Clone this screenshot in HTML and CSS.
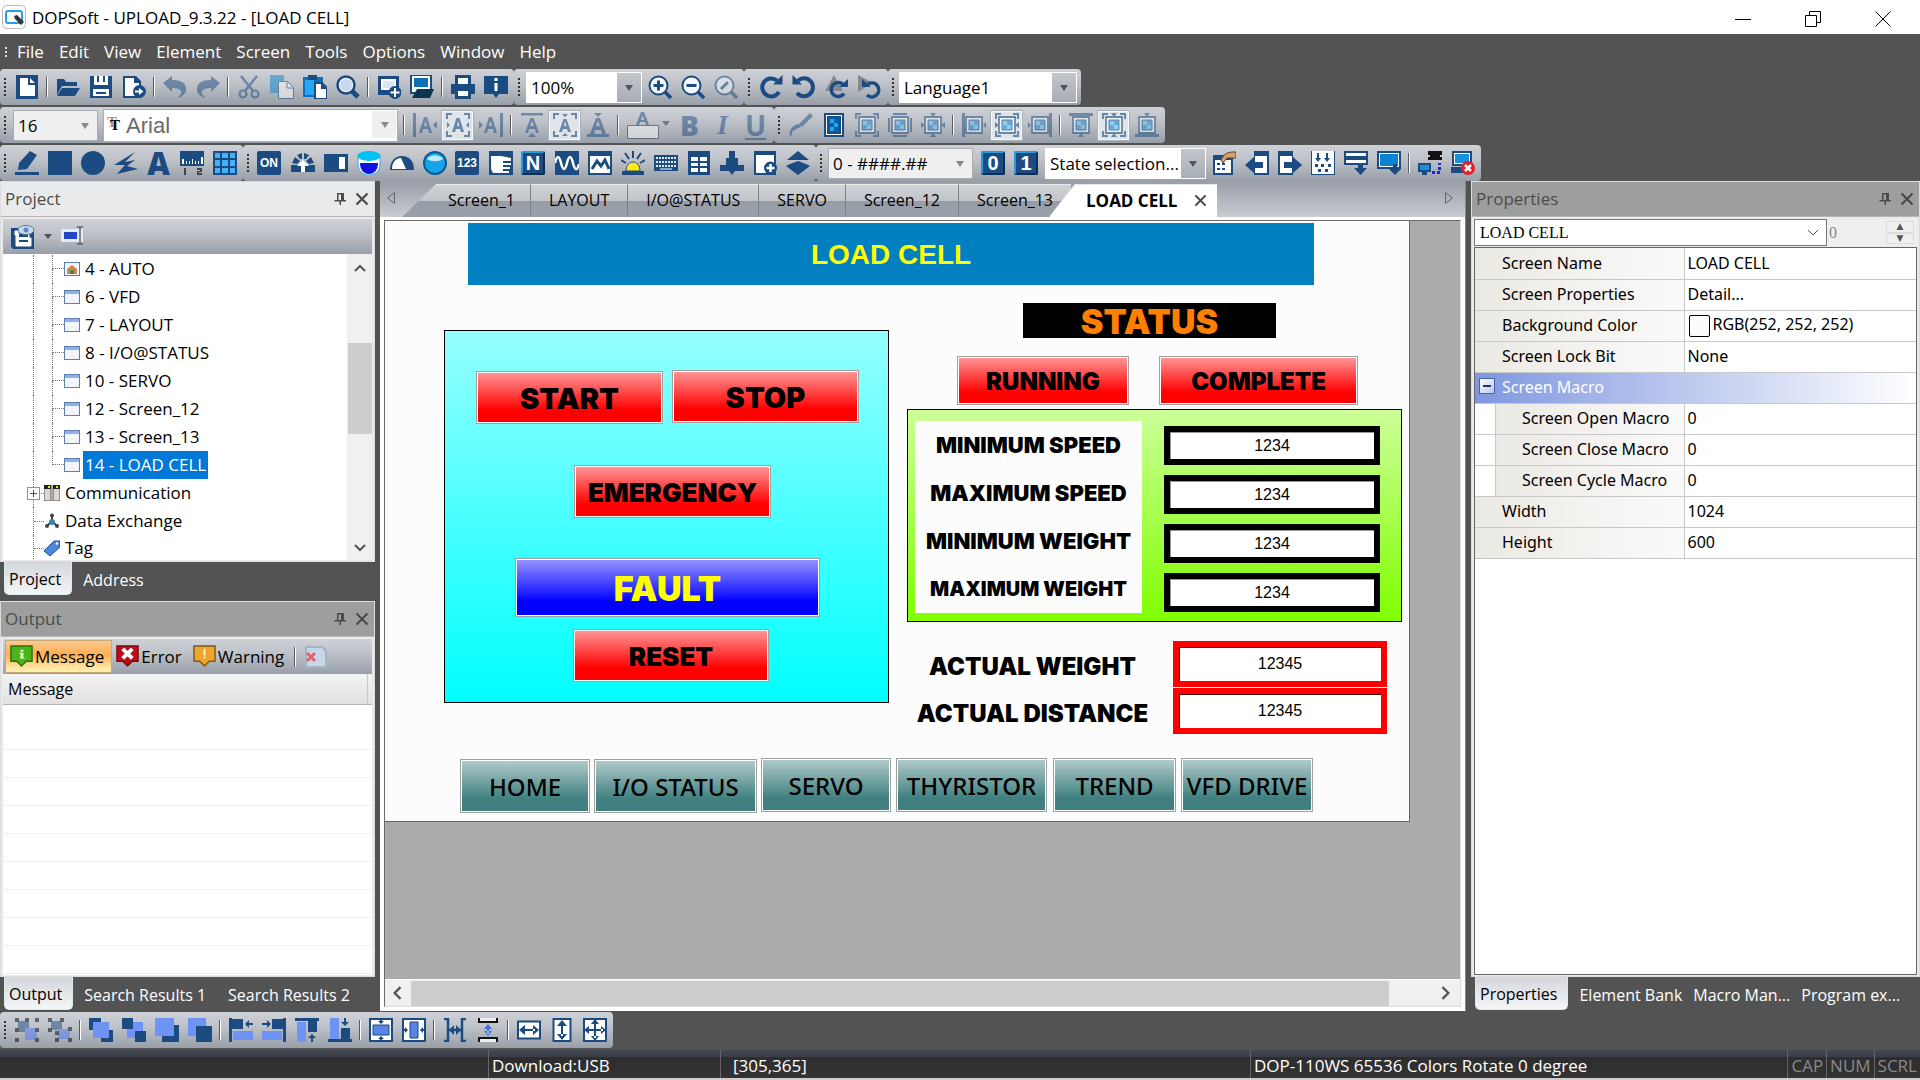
FILE: index.html
```html
<!DOCTYPE html>
<html lang="en">

<head>
    <meta charset="utf-8">
    <meta name="viewport" content="width=device-width, initial-scale=1">
    <title>DOPSoft - UPLOAD_9.3.22 - [LOAD CELL]</title>
    <link rel="stylesheet" href="styles.css">
</head>

<body>
    <!-- shared shapes -->
    <svg class="sprite" aria-hidden="true">
        <symbol id="pin" viewBox="0 0 14 14"><path d="M4 1h7v7h2v1.500H8V13H6.500V9.500H1.500V8H4zM5.500 2.500V8h2.500V2.500z" fill="currentColor" fill-rule="evenodd"/></symbol>
        <symbol id="close" viewBox="0 0 14 14"><path d="M1.500 1.500l11 11M12.500 1.500l-11 11" stroke="currentColor" stroke-width="2.200" fill="none"/></symbol>
        <symbol id="screen" viewBox="0 0 16 14"><rect x=".5" y=".5" width="15" height="13" fill="#f2f6fc" stroke="#5f7fae"/><rect x="1" y="1" width="14" height="3" fill="#8fb4ea"/></symbol>
        <symbol id="frame" viewBox="0 0 24 24"><path d="M4 4h16v16H4z" fill="#fff" stroke="#1b4b80" stroke-width="1.800"/><path d="M7 7h10v10H7z" fill="#1487d0" stroke="#1b4b80"/><path d="M8 8h4v4H8zM12 12h4v4h-4z" fill="#5cc0f5"/></symbol>
        <symbol id="corners" viewBox="0 0 24 24"><path d="M1 6V1h5M18 1h5v5M23 18v5h-5M6 23H1v-5" fill="none" stroke="#1b4b80" stroke-width="2"/></symbol>
    </svg>

    <div class="titlebar">
        <svg class="logo" viewBox="0 0 24 24"><rect x=".5" y=".5" width="23" height="23" rx="4" fill="#fff" stroke="#bbb"/><rect x="4" y="6" width="16" height="12" rx="2" fill="none" stroke="#2a9fe0" stroke-width="2"/><path d="M12 11l3-1 7 7-3 3-6-6z" fill="#333"/></svg>
        <span>DOPSoft - UPLOAD_9.3.22 - [LOAD CELL]</span>
        <div class="window-buttons">
            <button aria-label="Minimize"><svg viewBox="0 0 16 16"><path d="M0 8.500h16"/></svg></button>
            <button aria-label="Restore"><svg viewBox="0 0 16 16"><path d="M.5 4.500h11v11H.5zM4.500 4V.5h11v11H12"/></svg></button>
            <button aria-label="Close"><svg viewBox="0 0 16 16"><path d="M.5.5l15 15M15.500.5l-15 15"/></svg></button>
        </div>
    </div>

    <nav class="menubar">
        <i class="grip"></i>
        <a href="#">File</a>
        <a href="#">Edit</a>
        <a href="#">View</a>
        <a href="#">Element</a>
        <a href="#">Screen</a>
        <a href="#">Tools</a>
        <a href="#">Options</a>
        <a href="#">Window</a>
        <a href="#">Help</a>
    </nav>

    <div class="toolbars">
        <div class="toolbar-row">
            <div class="strip">
                <i class="grip"></i>
                <button class="tool" aria-label="New"><svg viewBox="0 0 24 24"><path d="M1 0h22v24H1z"/><path d="M5 3h8v7h7v11H5zM15 3l5 5h-5z" fill="#fff"/></svg></button>
                <i class="sep"></i>
                <button class="tool" aria-label="Open"><svg viewBox="0 0 24 24"><path d="M1 20V4h7l2 3h11v4H6z"/><path d="M6 13h18l-5 8H1z"/></svg></button>
                <button class="tool" aria-label="Save"><svg viewBox="0 0 24 24"><path d="M1 1h22v22H1z"/><path d="M5 1h14v9H5zM4 14h16v7H4z" fill="#fff"/><path d="M8 1h2v6H8zM14 1h2v6h-2zM7 17h10v2H7z"/></svg></button>
                <button class="tool" aria-label="Export"><svg viewBox="0 0 24 24"><path d="M1 1h13l5 5v17H1z"/><path d="M3 3h9v5h5v13H3z" fill="#fff"/><circle cx="17.500" cy="16.500" r="6.500"/><path d="M13 15.500h4V13l4.500 3.500L17 20v-2.500h-4z" fill="#fff"/></svg></button>
                <i class="sep"></i>
                <button class="tool" aria-label="Undo" disabled><svg viewBox="0 0 24 24"><path d="M0 8l9-7v4c9 0 14 3 14 9 0 5-4 8-9 9 4-3 5-5 4-7s-4-3-9-3v4z"/></svg></button>
                <button class="tool" aria-label="Redo" disabled><svg viewBox="0 0 24 24"><path d="M24 8l-9-7v4C6 5 1 8 1 14c0 5 4 8 9 9-4-3-5-5-4-7s4-3 9-3v4z"/></svg></button>
                <i class="sep"></i>
                <button class="tool" aria-label="Cut" disabled><svg viewBox="0 0 24 24"><path d="M4 1l12 15M20 1L8 16" stroke="#1b4b80" stroke-width="2.500"/><circle cx="6" cy="19" r="3.500" fill="none" stroke="#1b4b80" stroke-width="2.200"/><circle cx="18" cy="19" r="3.500" fill="none" stroke="#1b4b80" stroke-width="2.200"/></svg></button>
                <button class="tool" aria-label="Copy" disabled><svg viewBox="0 0 24 24"><path d="M0 0h14v18H0z" fill="#0a86cc"/><path d="M8.500 6.500h9l6 6v11h-15z" fill="#fff" stroke="#1b4b80"/><path d="M17 7v6h6" fill="none" stroke="#1b4b80"/></svg></button>
                <button class="tool" aria-label="Paste"><svg viewBox="0 0 24 24"><path d="M0 2h20v20H0z" fill="#0d6fc0"/><path d="M5 0h9v5H5z"/><path d="M2 5h9v15H2z" fill="#26a8f0"/><path d="M12 8h7l5 5v11H12z" fill="#fff" stroke="#1b4b80" stroke-width="2"/><path d="M18 8v6h6"/></svg></button>
                <button class="tool" aria-label="Find"><svg viewBox="0 0 24 24"><path d="M15 15l7 7" stroke="#1b4b80" stroke-width="5"/><circle cx="10" cy="10" r="8.500" fill="#eef3fa" stroke="#1b4b80" stroke-width="2.500"/><circle cx="10" cy="10" r="6" fill="#c9d8ec"/></svg></button>
                <i class="sep"></i>
                <button class="tool" aria-label="New screen"><svg viewBox="0 0 24 24"><path d="M1 1h21v19H1z"/><path d="M4 4h15v11H4z" fill="#fff"/><path d="M6 6h11v7H6z" fill="#dce6f2"/><circle cx="18" cy="17.500" r="6.500"/><path d="M17 13h2v3.500h3.500v2H19V22h-2v-3.500h-3.500v-2H17z" fill="#fff"/></svg></button>
                <button class="tool" aria-label="Open screen"><svg viewBox="0 0 24 24"><path d="M1 0h20v18H1z" fill="#fff" stroke="#1b4b80" stroke-width="2"/><path d="M4 3h14v9H4z" fill="#0d6fb8"/><path d="M2 23l5-9h17l-4 9z" fill="#0b3550"/></svg></button>
                <i class="sep"></i>
                <button class="tool" aria-label="Print"><svg viewBox="0 0 24 24"><path d="M4 0h16v9H4z"/><path d="M7 3h10v6H7z" fill="#fff"/><path d="M0 9h24v10H0z"/><path d="M4 15h16v9H4z"/><path d="M7 16h10v5H7z" fill="#fff"/></svg></button>
                <button class="tool" aria-label="About"><svg viewBox="0 0 24 24"><path d="M0 1h24v18h-9l-3 4-3-4H0z"/><path d="M10.500 3h3v3h-3zM10.500 8h3v8h-3z" fill="#fff"/></svg></button>
            </div>
            <div class="strip">
                <i class="grip"></i>
                <label class="combo zoom-combo"><select aria-label="Zoom"><option>100%</option></select></label>
                <button class="tool" aria-label="Zoom in"><svg viewBox="0 0 24 24"><path d="M16 16l7 7" stroke="#1b4b80" stroke-width="3.500"/><circle cx="10.500" cy="10.500" r="9" fill="#f4f7fb" stroke="#1b4b80" stroke-width="2"/><path d="M5.500 10.500h10M10.500 5.500v10" stroke="#1b4b80" stroke-width="3"/></svg></button>
                <button class="tool" aria-label="Zoom out"><svg viewBox="0 0 24 24"><path d="M16 16l7 7" stroke="#1b4b80" stroke-width="3.500"/><circle cx="10.500" cy="10.500" r="9" fill="#f4f7fb" stroke="#1b4b80" stroke-width="2"/><path d="M5.500 10.500h10" stroke="#1b4b80" stroke-width="3"/></svg></button>
                <button class="tool" aria-label="Actual size" disabled><svg viewBox="0 0 24 24"><path d="M16 16l7 7" stroke="#1b4b80" stroke-width="3.500"/><circle cx="10.500" cy="10.500" r="9" fill="#f4f7fb" stroke="#1b4b80" stroke-width="2"/><path d="M7 14l7-7" stroke="#1b4b80" stroke-width="3"/></svg></button>
            </div>
            <div class="strip">
                <i class="grip"></i>
                <button class="tool" aria-label="Rotate right"><svg viewBox="0 0 24 24"><path d="M18 5.500A9 9 0 1 0 20 17" fill="none" stroke="#1b4b80" stroke-width="4"/><path d="M14 9.500h9.500V0z"/></svg></button>
                <button class="tool" aria-label="Rotate left"><svg viewBox="0 0 24 24"><path d="M6 5.500A9 9 0 1 1 5 18" fill="none" stroke="#1b4b80" stroke-width="4"/><path d="M10 9.500H.5V0z"/></svg></button>
                <button class="tool" aria-label="Rotate clockwise"><svg viewBox="0 0 24 24"><path d="M9 0l9 16H0z" fill="#858a92"/><path d="M18 9.500A7 7 0 1 0 19 18.500" fill="none" stroke="#1b4b80" stroke-width="3.500"/><path d="M14 12h9V4z"/></svg></button>
                <button class="tool" aria-label="Rotate anticlockwise"><svg viewBox="0 0 24 24"><path d="M0 0l15 8-15 9z" fill="#858a92"/><path d="M10 9A7 7 0 1 1 9 20" fill="none" stroke="#1b4b80" stroke-width="3.500"/><path d="M13 12H4V4z"/></svg></button>
            </div>
            <div class="strip">
                <i class="grip"></i>
                <label class="combo language-combo"><select aria-label="Language"><option>Language1</option></select></label>
            </div>
        </div>

        <div class="toolbar-row">
            <div class="strip">
                <i class="grip"></i>
                <label class="combo size-combo flat"><select aria-label="Font size"><option>16</option></select></label>
                <label class="combo font-combo flat"><b class="tt">T</b><select aria-label="Font"><option>Arial</option></select></label>
                <i class="sep"></i>
                <button class="tool" aria-label="Text left" disabled><svg viewBox="0 0 24 24"><path d="M0 0h3v24H0zM24 8v8l-4-4z"/><path d="M6 20l5-16h3l5 16h-3l-1-4H10l-1 4zm5-7h3l-1.500-5z"/></svg></button>
                <button class="tool on" aria-label="Text middle"><svg viewBox="0 0 24 24"><use href="#corners"/><path d="M6 19L10.500 5h3L18 19h-3l-1-3h-4l-1 3zm5-6h2.500L12 8zM1 9l3 3-3 3zM23 9l-3 3 3 3z"/></svg></button>
                <button class="tool" aria-label="Text right" disabled><svg viewBox="0 0 24 24"><path d="M21 0h3v24h-3zM0 8v8l4-4z"/><path d="M5 20l5-16h3l5 16h-3l-1-4H9l-1 4zm5-7h3l-1.500-5z"/></svg></button>
                <i class="sep"></i>
                <button class="tool" aria-label="Text top" disabled><svg viewBox="0 0 24 24"><path d="M1 0h22v2.500H1zM8 24l4-4 4 4z"/><path d="M5 20l5.500-15h3L19 20h-3l-1-4H9l-1 4zm5-7h4l-2-5z"/></svg></button>
                <button class="tool on" aria-label="Text center"><svg viewBox="0 0 24 24"><use href="#corners"/><path d="M6 19L10.500 6h3L18 19h-3l-1-3h-4l-1 3zm5-6h2.500L12 8zM9 1h6l-3 3zM9 23h6l-3-3z"/></svg></button>
                <button class="tool" aria-label="Text bottom" disabled><svg viewBox="0 0 24 24"><path d="M1 21h22v3H1zM8 0l4 4 4-4z"/><path d="M4 21l6-16h4l6 16h-4l-1-4H9l-1 4zm6-8h4l-2-5z"/></svg></button>
                <i class="sep"></i>
                <button class="tool wide" aria-label="Font color" disabled><svg class="color-a" viewBox="0 0 44 28"><path d="M10 14L15 1h3l5 13h-3l-1-3h-5l-1 3zM15 9h3l-1.500-5z"/><path d="M1.500 14.500h31v13h-31z" fill="#fff" stroke="#333"/><path d="M36 10h8l-4 5z" fill="#333"/></svg></button>
                <button class="tool letter" disabled><b>B</b></button>
                <button class="tool letter" disabled><em>I</em></button>
                <button class="tool letter" disabled><u>U</u></button>
            </div>
            <div class="strip">
                <i class="grip"></i>
                <button class="tool" aria-label="Brush" disabled><svg viewBox="0 0 24 24"><path d="M10 11L21 0l3 3-11 11z"/><path d="M11 12c3 3-4 3-7 6-2 2-1 4-2 6-2-2-2-5 0-8 3-4 7-6 9-4z"/></svg></button>
                <button class="tool" aria-label="Fill"><svg viewBox="0 0 24 24"><path d="M2 0h20v24H2z"/><path d="M4 2h16v20H4z" fill="#fff"/><path d="M5 3h14v18H5z"/><path d="M7 5h10v14H7z" fill="#0a60a8"/><path d="M8 6h4v4H8zM12 10h4v4h-4zM8 14h4v4H8z" fill="#27a4ee"/></svg></button>
                <button class="tool" aria-label="Picture stretch" disabled><svg viewBox="0 0 24 24"><use href="#frame"/><use href="#corners"/></svg></button>
                <button class="tool" aria-label="Picture keep" disabled><svg viewBox="0 0 24 24"><use href="#frame"/><path d="M5 0h14v2H5zM5 22h14v2H5zM0 5h2v14H0zM22 5h2v14h-2z"/></svg></button>
                <button class="tool" aria-label="Picture fit" disabled><svg viewBox="0 0 24 24"><use href="#frame"/><path d="M9 0h6l-3 4zM9 24h6l-3-4zM0 9v6l4-3zM24 9v6l-4-3z"/></svg></button>
                <i class="sep"></i>
                <button class="tool" aria-label="Picture left" disabled><svg viewBox="0 0 24 24"><use href="#frame"/><path d="M0 0h3v24H0zM24 9v6l-3-3z"/></svg></button>
                <button class="tool on" aria-label="Picture middle"><svg viewBox="0 0 24 24"><use href="#frame"/><use href="#corners"/><path d="M0 9v6l4-3zM24 9v6l-4-3z"/></svg></button>
                <button class="tool" aria-label="Picture right" disabled><svg viewBox="0 0 24 24"><use href="#frame"/><path d="M21 0h3v24h-3zM0 9v6l3-3z"/></svg></button>
                <i class="sep"></i>
                <button class="tool" aria-label="Picture top" disabled><svg viewBox="0 0 24 24"><use href="#frame"/><path d="M0 0h24v3H0zM9 24h6l-3-4z"/></svg></button>
                <button class="tool on" aria-label="Picture center"><svg viewBox="0 0 24 24"><use href="#frame"/><use href="#corners"/><path d="M9 0h6l-3 4zM9 24h6l-3-4z"/></svg></button>
                <button class="tool" aria-label="Picture bottom" disabled><svg viewBox="0 0 24 24"><use href="#frame"/><path d="M0 21h24v3H0zM9 0h6l-3 4z"/></svg></button>
            </div>
        </div>

        <div class="toolbar-row">
            <div class="strip">
                <i class="grip"></i>
                <button class="tool" aria-label="Line"><svg viewBox="0 0 24 24"><path d="M0 21h24v3H0zM3 19l1-7L15 0l7 4-10 14z"/></svg></button>
                <button class="tool" aria-label="Rectangle"><svg viewBox="0 0 24 24"><path d="M0 0h24v24H0z"/></svg></button>
                <button class="tool" aria-label="Ellipse"><svg viewBox="0 0 24 24"><circle cx="12" cy="12" r="12"/></svg></button>
                <button class="tool" aria-label="Polygon"><svg viewBox="0 0 24 24"><path d="M21 1L0 14h11L3 23l21-5-11-3 8-6-10 2z"/></svg></button>
                <button class="tool letter big"><b>A</b></button>
                <button class="tool" aria-label="Scale"><svg viewBox="0 0 24 24"><path d="M0 0h24v15H0z"/><path d="M2 8h2v5H2zM6 10h1v3H6zM9 10h1v3H9zM12 8h1v5h-1zM15 10h1v3h-1zM18 10h1v3h-1zM21 6h2v7h-2z" fill="#fff"/><path d="M4 17h2v7H4zM17 17h5v4h-3v1h3v2h-5v-4h3v-1h-3z" fill="#444"/></svg></button>
                <button class="tool" aria-label="Table"><svg viewBox="0 0 24 24"><path d="M0 0h24v24H0z"/><path d="M2 2h5v5H2zM9 2h6v5H9zM17 2h5v5h-5zM2 9h5v6H2zM9 9h6v6H9zM17 9h5v6h-5zM2 17h5v5H2zM9 17h6v5H9zM17 17h5v5h-5z" fill="#43b1f7"/></svg></button>
            </div>
            <div class="strip">
                <i class="grip"></i>
                <button class="tool badge">ON</button>
                <button class="tool" aria-label="Meter"><svg viewBox="0 0 24 24"><path d="M1 12l3-6 5 4-3 3zM6 4l5-2v6H9zM13 2l5 2-3 4h-2zM20 6l3 6-5 1-3-3zM0 14h24v7H0z"/><path d="M12 9l6 6h-4v6h-4v-6H6z" fill="#fff"/></svg></button>
                <button class="tool" aria-label="Bar"><svg viewBox="0 0 24 24"><path d="M0 3h24v18H0z"/><path d="M15 6h6v12h-6z" fill="#fff"/></svg></button>
                <button class="tool" aria-label="Tank"><svg viewBox="0 0 24 24"><path d="M1 4v9c0 7 5 11 11 11s11-4 11-11V4z" fill="#fff" stroke="#35a7e8"/><path d="M3 12h18c0 7-4 11-9 11s-9-4-9-11z" fill="#1010e0"/><ellipse cx="12" cy="5" rx="11.500" ry="5" fill="#00c0f5"/></svg></button>
                <button class="tool" aria-label="Gauge"><svg viewBox="0 0 24 24"><path d="M0 19C0 10 5 5 12 5s12 5 12 14z"/><path d="M2 18C2 11 6 7 11 7l5 11z" fill="#fff"/></svg></button>
                <button class="tool" aria-label="Pie"><svg viewBox="0 0 24 24"><circle cx="12" cy="12" r="11" fill="#18a4e8" stroke="#0a5a9a" stroke-width="2"/><path d="M4 8c3-5 13-5 16 0-4 3-12 3-16 0z" fill="#bde9fb"/></svg></button>
                <button class="tool badge">123</button>
                <button class="tool" aria-label="Text list"><svg viewBox="0 0 24 24"><path d="M0 0h24v24H0z"/><path d="M2 5h10l10 2v3h-8v2h8v2h-8v2h7v2h-7v2h6v2H4L2 18z" fill="#fff"/></svg></button>
                <button class="tool badge big">N</button>
                <button class="tool" aria-label="Curve"><svg viewBox="0 0 24 24"><path d="M0 0h24v24H0z"/><path d="M0 12c2-8 4-8 6 0s4 8 6 0 4-8 6 0 4 8 6 1" fill="none" stroke="#fff" stroke-width="2.500"/></svg></button>
                <button class="tool" aria-label="History"><svg viewBox="0 0 24 24"><path d="M0 0h24v24H0z"/><path d="M2 5h20v17H2z" fill="#fff"/><path d="M4 18l5-8 4 5 4-6 4 9" fill="none" stroke="#1b4b80" stroke-width="3"/></svg></button>
                <button class="tool" aria-label="Alarm"><svg viewBox="0 0 24 24"><path d="M1 20h22v4H1z"/><path d="M5 20c0-12 14-12 14 0z" fill="#ffe81a" stroke="#1b4b80"/><path d="M12 0v7M4 2l4 6M20 2l-4 6M0 9l5 3M24 9l-5 3" stroke="#1b4b80" stroke-width="2"/></svg></button>
                <button class="tool" aria-label="Keyboard"><svg viewBox="0 0 24 24"><path d="M0 4h24v16H0z"/><path d="M2 7h20M2 11h20M2 15h20" stroke="#dfe6ef" stroke-width="2" stroke-dasharray="2 1"/><path d="M6 18h12" stroke="#fff"/></svg></button>
                <button class="tool" aria-label="Recipe"><svg viewBox="0 0 24 24"><path d="M1 0h22v24H1z"/><path d="M4 6h7v4H4zM13 6h7v4h-7zM4 12h7v3H4zM13 12h7v3h-7zM4 17h7v4H4zM13 17h7v4h-7z" fill="#fff"/></svg></button>
                <button class="tool" aria-label="Slider"><svg viewBox="0 0 24 24"><path d="M9 0h6v7h3v7h6v6h-9l-3 4-3-4H0v-6h6V7h3z"/></svg></button>
                <button class="tool" aria-label="Add element"><svg viewBox="0 0 24 24"><path d="M1 0h22v24H1z"/><path d="M3 4h18v18H3z" fill="#fff"/><circle cx="17.500" cy="17" r="6.500"/><path d="M13.500 17h8M17.500 13v8" stroke="#fff" stroke-width="2.500"/></svg></button>
                <button class="tool" aria-label="Layers"><svg viewBox="0 0 24 24"><path d="M12 0l11 9H1zM4 13l8-3 8 3 4 2-12 9L0 15z"/></svg></button>
            </div>
            <div class="strip">
                <i class="grip"></i>
                <label class="combo format-combo flat"><select aria-label="Format"><option>0 - ####.##</option></select></label>
                <button class="tool badge state">0</button>
                <button class="tool badge state">1</button>
                <label class="combo state-combo"><select aria-label="State"><option>State selection...</option></select></label>
                <button class="tool" aria-label="Settings"><svg viewBox="0 0 24 24"><path d="M1 4h20v20H1z"/><path d="M3 9h16v13H3z" fill="#fff"/><path d="M5 12h3v2H5zM10 12h3v2h-3zM5 17h3v2H5zM10 17h3v2h-3z"/><path d="M9 9c4-8 8-8 15-8v6h-9l-4 5z" fill="#d9a066" stroke="#5a4030"/></svg></button>
                <button class="tool" aria-label="Previous screen"><svg viewBox="0 0 24 24"><path d="M9 0h15v24H9z"/><path d="M10 5h12v17H10z" fill="#fff"/><path d="M0 14l9-8v5h9v6H9v5z"/></svg></button>
                <button class="tool" aria-label="Next screen"><svg viewBox="0 0 24 24"><path d="M0 0h15v24H0z"/><path d="M2 5h12v17H2z" fill="#fff"/><path d="M24 14l-9-8v5H6v6h9v5z"/></svg></button>
                <button class="tool" aria-label="Download all"><svg viewBox="0 0 24 24"><path d="M0 0h24v24H0z"/><path d="M1 0h22v23H1z" fill="#fff"/><path d="M7 2v6M16 2v6" stroke="#1b4b80" stroke-width="2"/><path d="M4 7h6l-3 4zM13 7h6l-3 4zM4 13h3v3H4zM10 13h3v3h-3zM17 13h3v3h-3zM7 18h3v3H7zM14 18h3v3h-3z"/></svg></button>
                <button class="tool" aria-label="Download screen"><svg viewBox="0 0 24 24"><path d="M1 1h22v5H1zM1 8h22v5H1z" fill="#fff" stroke="#1b4b80" stroke-width="2"/><path d="M14 12h5v5h4l-6.500 7L10 17h4zM6 5h12v4H6z"/></svg></button>
                <button class="tool" aria-label="Download data"><svg viewBox="0 0 24 24"><path d="M0 0h24v18H0z"/><path d="M2 2h20v14H2z" fill="#fff"/><path d="M3 3h18v12H3z" fill="#0a84d0"/><path d="M16 13h4v5h4l-6 6-6-6h4z"/></svg></button>
                <i class="sep"></i>
                <button class="tool" aria-label="Online simulation"><svg viewBox="0 0 24 24"><path d="M10 0h14v4H10zM12 4h10v2H12zM10 6h14v3H10z" fill="#111"/><path d="M0 12h13v9H0z"/><path d="M2 14h9v5H2z" fill="#1a90dc"/><path d="M4 21h5v3H4z"/><path d="M14 20h3v3h-3zM19 20h3v3h-3zM20 16h3v3h-3zM20 12h3v2h-3z" fill="#2222dd"/></svg></button>
                <button class="tool" aria-label="Offline simulation"><svg viewBox="0 0 24 24"><path d="M1 0h20v15H1zM0 16h20v6H0z"/><path d="M3 2h16v11H3z" fill="#fff"/><path d="M4 3h14v9H4z" fill="#1a90dc"/><circle cx="17" cy="17" r="7" fill="#e3202a"/><path d="M14 14l6 6M20 14l-6 6" stroke="#fff" stroke-width="2.500"/></svg></button>
            </div>
        </div>
    </div>

    <main class="workspace">
        <aside class="dock left-dock">
            <section class="panel project-panel">
                <h2 class="panel-title active">Project <svg><use href="#pin"/></svg><svg><use href="#close"/></svg></h2>
                <div class="panel-tools">
                    <button class="tool" aria-label="Project view"><svg viewBox="0 0 24 24"><path d="M0 3h23v21H2L0 22z"/><path d="M4 6h3v3h11v4h2v8H5V10H4zM7 12v7M10 13h7v2h-7zM10 17h7v2h-7z" fill="#fff" stroke="#fff"/><path d="M8 9h9v3H8zM8 15h9v2H8z"/><ellipse cx="15" cy="5" rx="8" ry="4.500" fill="#c8dcec" stroke="#5d7d9d"/><circle cx="15" cy="5" r="2.500" fill="#5d8cb8"/></svg></button>
                    <i class="caret"></i>
                    <button class="tool" aria-label="Rename"><svg viewBox="0 0 24 24"><path d="M0 4h22v13H0z" fill="#e5e9f2"/><path d="M3 7h13v7H3z" fill="#2347c4"/><path d="M16 2h6M16 19h6M19 2v17" stroke="#666" stroke-width="1.500"/></svg></button>
                </div>
                <div class="tree-wrap">
                    <ul class="tree">
                        <li class="sub"><svg viewBox="0 0 16 14"><rect x=".5" y=".5" width="15" height="13" fill="#f2f6fc" stroke="#5f7fae"/><path d="M3 7l5-4 5 4v5H3z" fill="#c88c4a"/><path d="M6 8h4v4H6z" fill="#5c7a4a"/></svg><span>4 - AUTO</span></li>
                        <li class="sub"><svg><use href="#screen"/></svg><span>6 - VFD</span></li>
                        <li class="sub"><svg><use href="#screen"/></svg><span>7 - LAYOUT</span></li>
                        <li class="sub"><svg><use href="#screen"/></svg><span>8 - I/O@STATUS</span></li>
                        <li class="sub"><svg><use href="#screen"/></svg><span>10 - SERVO</span></li>
                        <li class="sub"><svg><use href="#screen"/></svg><span>12 - Screen_12</span></li>
                        <li class="sub"><svg><use href="#screen"/></svg><span>13 - Screen_13</span></li>
                        <li class="sub last"><svg><use href="#screen"/></svg><span class="selected">14 - LOAD CELL</span></li>
                        <li class="top"><i class="expander"></i><svg viewBox="0 0 16 16"><path d="M0 0h7v16H0zM9 0h7v16H9z" fill="#ddd8cf" stroke="#555"/><path d="M0 0h7v4H0zM9 0h7v4H9z" fill="#222"/><path d="M4 1h2v2H4zM12 1h2v2h-2z" fill="#ee0"/></svg><span>Communication</span></li>
                        <li class="top"><svg viewBox="0 0 16 16"><path d="M8 2v6L3 13M8 8l5 5" stroke="#444" stroke-width="2" fill="none"/><circle cx="8" cy="9" r="3" fill="#3b83b4"/><circle cx="8" cy="2.500" r="2" fill="#444"/><circle cx="3" cy="13" r="2" fill="#444"/><circle cx="13" cy="13" r="2" fill="#444"/></svg><span>Data Exchange</span></li>
                        <li class="top"><svg viewBox="0 0 16 16"><path d="M0 11L10 1h6v6L6 16z" fill="#4b86dc" stroke="#284f94"/><circle cx="13" cy="3.500" r="1.300" fill="#fff"/></svg><span>Tag</span></li>
                    </ul>
                    <div class="vscroll"><svg viewBox="0 0 12 8"><path d="M1 7l5-5 5 5"/></svg><i></i><svg viewBox="0 0 12 8"><path d="M1 1l5 5 5-5"/></svg></div>
                </div>
            </section>
            <div class="dock-tabs">
                <button class="current">Project</button>
                <button>Address</button>
            </div>

            <section class="panel output-panel">
                <h2 class="panel-title">Output <svg><use href="#pin"/></svg><svg><use href="#close"/></svg></h2>
                <div class="panel-tools output-tools">
                    <button class="filter pressed"><svg viewBox="0 0 24 24"><path d="M1 1h22v16h-6l-5 5-5-5H1z" fill="#4bb417" stroke="#2f6d10" stroke-width="1.500"/><path d="M11 5h3v2h-3zM10 8h4v5h1v1h-5v-1h1V9h-1z" fill="#e9ffd8"/></svg>Message</button>
                    <button class="filter"><svg viewBox="0 0 24 24"><path d="M1 1h22v16h-6l-5 5-5-5H1z" fill="#c00a16" stroke="#7e0a10" stroke-width="1.500"/><path d="M7 4l10 10M17 4L7 14" stroke="#fff" stroke-width="4"/></svg>Error</button>
                    <button class="filter"><svg viewBox="0 0 24 24"><path d="M1 1h22v16h-6l-5 5-5-5H1z" fill="#eea52c" stroke="#7a5a1e" stroke-width="1.500"/><path d="M11 4h2v7h-2zM11 12h2v2h-2z" fill="#fff2c8"/></svg>Warning</button>
                    <i class="sep"></i>
                    <button class="tool" aria-label="Clear"><svg viewBox="0 0 24 24"><path d="M2 2h16l4 4v16H2z" fill="#c9d6e6" stroke="#a3b3c8" stroke-width="2"/><path d="M3 8l8 8M11 8l-8 8" stroke="#e0646c" stroke-width="3"/></svg></button>
                </div>
                <div class="list-head">Message</div>
                <div class="list-body"></div>
            </section>
            <div class="dock-tabs">
                <button class="current">Output</button>
                <button>Search Results 1</button>
                <button>Search Results 2</button>
            </div>
        </aside>

        <section class="editor">
            <div class="editor-tabs">
                <button class="arrow" aria-label="Scroll tabs left"><svg viewBox="0 0 10 14"><path d="M8.500 1.500v11L1.500 7z"/></svg></button>
                <button class="tab first">Screen_1</button>
                <button class="tab">LAYOUT</button>
                <button class="tab">I/O@STATUS</button>
                <button class="tab">SERVO</button>
                <button class="tab">Screen_12</button>
                <button class="tab">Screen_13</button>
                <button class="tab current">LOAD CELL <svg><use href="#close"/></svg></button>
                <button class="arrow end" aria-label="Scroll tabs right"><svg viewBox="0 0 10 14"><path d="M1.500 1.500v11l7-5.500z"/></svg></button>
            </div>
            <div class="editor-body">
                <div class="canvas">
                    <!-- HMI screen, 1024 x 600 -->
                    <div class="hmi">
                        <div class="item banner">LOAD CELL</div>
                        <div class="item cyan-box"></div>
                        <button class="item key red start">START</button>
                        <button class="item key red stop">STOP</button>
                        <button class="item key red emergency">EMERGENCY</button>
                        <button class="item key blue fault">FAULT</button>
                        <button class="item key red reset">RESET</button>

                        <div class="item status">STATUS</div>
                        <button class="item key red running">RUNNING</button>
                        <button class="item key red complete">COMPLETE</button>

                        <div class="item green-box">
                            <div class="labels">
                                <label for="minspeed">MINIMUM SPEED</label>
                                <label for="maxspeed">MAXIMUM SPEED</label>
                                <label for="minweight">MINIMUM WEIGHT</label>
                                <label for="maxweight" class="small">MAXIMUM WEIGHT</label>
                            </div>
                            <div class="values">
                                <input id="minspeed" value="1234">
                                <input id="maxspeed" value="1234">
                                <input id="minweight" value="1234">
                                <input id="maxweight" value="1234">
                            </div>
                        </div>

                        <div class="item actual">
                            <label for="actweight">ACTUAL WEIGHT</label>
                            <input id="actweight" value="12345">
                            <label for="actdistance">ACTUAL DISTANCE</label>
                            <input id="actdistance" value="12345">
                        </div>

                        <button class="item key teal low home">HOME</button>
                        <button class="item key teal low io">I/O STATUS</button>
                        <button class="item key teal servo">SERVO</button>
                        <button class="item key teal thyristor">THYRISTOR</button>
                        <button class="item key teal trend">TREND</button>
                        <button class="item key teal vfd">VFD DRIVE</button>
                    </div>
                </div>
                <div class="hscroll"><svg viewBox="0 0 8 12"><path d="M7 1L2 6l5 5"/></svg><i></i><svg viewBox="0 0 8 12"><path d="M1 1l5 5-5 5"/></svg></div>
            </div>
        </section>

        <aside class="dock right-dock">
            <section class="panel properties-panel">
                <h2 class="panel-title">Properties <svg><use href="#pin"/></svg><svg><use href="#close"/></svg></h2>
                <div class="object-row">
                    <label class="object-combo"><select aria-label="Object"><option>LOAD CELL</option></select><svg viewBox="0 0 12 8"><path d="M1 1l5 5 5-5"/></svg></label>
                    <div class="spin"><input value="0" aria-label="Index" disabled><span><button disabled aria-label="Up">▲</button><button disabled aria-label="Down">▼</button></span></div>
                </div>
                <div class="grid-wrap">
                    <table class="props">
                        <tr><th>Screen Name</th><td>LOAD CELL</td></tr>
                        <tr><th>Screen Properties</th><td>Detail...</td></tr>
                        <tr><th>Background Color</th><td><i class="swatch"></i>RGB(252, 252, 252)</td></tr>
                        <tr><th>Screen Lock Bit</th><td>None</td></tr>
                        <tr class="group"><th colspan="2"><i class="collapse"></i>Screen Macro</th></tr>
                        <tr class="child"><th>Screen Open Macro</th><td>0</td></tr>
                        <tr class="child"><th>Screen Close Macro</th><td>0</td></tr>
                        <tr class="child"><th>Screen Cycle Macro</th><td>0</td></tr>
                        <tr><th>Width</th><td>1024</td></tr>
                        <tr><th>Height</th><td>600</td></tr>
                    </table>
                </div>
            </section>
            <div class="dock-tabs">
                <button class="current">Properties</button>
                <button>Element Bank</button>
                <button>Macro Man...</button>
                <button>Program ex...</button>
            </div>
        </aside>
    </main>

    <div class="toolbar-row bottom-row">
        <div class="strip">
            <i class="grip"></i>
            <button class="tool" aria-label="Group" disabled><svg viewBox="0 0 24 24"><path d="M3 3h11v11H3z"/><path d="M10 10h12v12H10z" fill="#4f78f5"/><path d="M0 0h4v4H0zM10 0h4v4h-4zM20 0h4v4h-4zM0 10h4v4H0zM0 20h4v4H0zM20 20h4v4h-4zM20 10h4v4h-4z" fill="#000"/></svg></button>
            <button class="tool" aria-label="Ungroup" disabled><svg viewBox="0 0 24 24"><path d="M3 3h11v9H3z"/><path d="M10 11h12v10H10z" fill="#4f78f5"/><path d="M0 0h4v4H0zM12 0h4v4h-4zM0 10h4v4H0zM7 13h4v4H7zM7 20h4v4H7zM20 20h4v4h-4zM20 9h4v4h-4z" fill="#000"/></svg></button>
            <i class="sep"></i>
            <button class="tool" aria-label="Bring forward"><svg viewBox="0 0 24 24"><path d="M0 0h12v12H0zM12 12h12v12H12z"/><path d="M4 4h16v16H4z" fill="#6f93f5"/></svg></button>
            <button class="tool" aria-label="Send backward"><svg viewBox="0 0 24 24"><path d="M5 4h16v16H5z" fill="#6f93f5"/><path d="M0 0h11v11H0zM13 13h11v11H13z"/></svg></button>
            <button class="tool" aria-label="Bring to front"><svg viewBox="0 0 24 24"><path d="M7 7h17v17H7z"/><path d="M0 0h19v18H0z" fill="#6f93f5"/></svg></button>
            <button class="tool" aria-label="Send to back"><svg viewBox="0 0 24 24"><path d="M0 0h18v18H0z" fill="#6f93f5"/><path d="M8 8h16v16H8z"/></svg></button>
            <i class="sep"></i>
            <button class="tool" aria-label="Align left"><svg viewBox="0 0 24 24"><path d="M0 0h3v24H0zM3 1h11v10H3zM16 6l4-4v3h4v2h-4v3z"/><path d="M4 13h20v9H4z" fill="#6f93f5"/></svg></button>
            <button class="tool" aria-label="Align right"><svg viewBox="0 0 24 24"><path d="M21 0h3v24h-3zM10 1h11v10H10zM9 6L5 2v3H0v2h5v3z"/><path d="M0 13h20v9H0z" fill="#6f93f5"/></svg></button>
            <button class="tool" aria-label="Align top"><svg viewBox="0 0 24 24"><path d="M0 0h24v3H0zM13 3h9v11h-9zM17 16l4 4h-3v4h-2v-4h-3z"/><path d="M2 4h9v20H2z" fill="#6f93f5"/></svg></button>
            <button class="tool" aria-label="Align bottom"><svg viewBox="0 0 24 24"><path d="M0 21h24v3H0zM13 10h9v11h-9zM17 8l4-4h-3V0h-2v4h-3z"/><path d="M2 0h9v21H2z" fill="#6f93f5"/></svg></button>
            <i class="sep"></i>
            <button class="tool" aria-label="Center vertically"><svg viewBox="0 0 24 24"><path d="M1 1h22v22H1z" fill="#fff" stroke="#1b4b80" stroke-width="2"/><path d="M4 7h16v10H4z" fill="#5a83e6" stroke="#1b4b80"/><path d="M11 1h2v2h2l-3 3-3-3h2zM11 23h2v-2h2l-3-3-3 3h2z"/></svg></button>
            <button class="tool" aria-label="Center horizontally"><svg viewBox="0 0 24 24"><path d="M1 1h22v22H1z" fill="#fff" stroke="#1b4b80" stroke-width="2"/><path d="M8 4h8v16H8z" fill="#5a83e6" stroke="#1b4b80"/><path d="M1 11v2h2v2l3-3-3-3v2zM23 11v2h-2v2l-3-3 3-3v2z"/></svg></button>
            <i class="sep"></i>
            <button class="tool" aria-label="Space across"><svg viewBox="0 0 24 24"><path d="M1 1h4v22H1M23 1h-4v22h4M5 12h14" stroke="#1b4b80" stroke-width="2.500" fill="none"/><path d="M6 12l5-5v10zM18 12l-5-5v10z"/></svg></button>
            <button class="tool" aria-label="Space down"><svg viewBox="0 0 24 24"><path d="M3 0v4h18V0M3 24v-4h18v4" stroke="#111" stroke-width="2" fill="#eee"/><path d="M11 8h2v8h-2zM8 11l4-5 4 5zM8 13l4 5 4-5z" fill="#3b6fe0"/></svg></button>
            <i class="sep"></i>
            <button class="tool" aria-label="Same width"><svg viewBox="0 0 24 24"><path d="M1 3.500h22v17H1z" fill="#fff" stroke="#1b4b80" stroke-width="2"/><path d="M6 11h12v2H6zM2 12l6-5v10zM22 12l-6-5v10z"/></svg></button>
            <button class="tool" aria-label="Same height"><svg viewBox="0 0 24 24"><path d="M3.500 1h17v22h-17z" fill="#fff" stroke="#1b4b80" stroke-width="2"/><path d="M11 6h2v12h-2zM12 2l5 6H7zM12 22l5-6H7z"/></svg></button>
            <button class="tool" aria-label="Same size"><svg viewBox="0 0 24 24"><path d="M1 1h22v22H1z" fill="#fff" stroke="#1b4b80" stroke-width="2"/><path d="M11 4h2v16h-2zM4 11h16v2H4zM12 1l4 5H8zM12 23l4-5H8zM1 12l5-4v8zM23 12l-5-4v8z"/></svg></button>
        </div>
    </div>

    <footer class="statusbar">
        <span class="blank"></span>
        <span class="link">Download:USB</span>
        <span class="pos">[305,365]</span>
        <span class="model">DOP-110WS 65536 Colors Rotate 0 degree</span>
        <span class="lock">CAP</span>
        <span class="lock">NUM</span>
        <span class="lock">SCRL</span>
    </footer>
</body>

</html>
```

FILE: styles.css
```css
* {
    box-sizing: border-box;
}

body {
    margin: 0;
    height: 100vh;
    display: flex;
    flex-direction: column;
    overflow: hidden;
    background-color: #535353;
    color: #000;
    font-family: "Open Sans", "Noto Sans", sans-serif;
    font-size: 17px;
    border-bottom: 2px solid #cfcdcd;
}

button,
select,
input {
    font: inherit;
    color: inherit;
    border: 0;
    padding: 0;
    margin: 0;
    background: none;
    border-radius: 0;
}

select {
    appearance: none;
    opacity: 1;
}

.sprite {
    display: none;
}

/* title and menu */
.titlebar {
    flex: none;
    height: 34px;
    display: flex;
    align-items: center;
    gap: 6px;
    padding-left: 2px;
    background-color: #fff;
}

.logo {
    width: 24px;
    height: 24px;
}

.window-buttons {
    margin-left: auto;
    padding-right: 2px;
    display: flex;
}

.window-buttons button {
    width: 70px;
    height: 30px;
}

.window-buttons svg {
    width: 16px;
    height: 16px;
    fill: none;
    stroke: #000;
    vertical-align: middle;
}

.menubar {
    flex: none;
    height: 35px;
    display: flex;
    align-items: center;
    gap: 15px;
    padding-left: 4px;
}

.menubar a {
    color: #fff;
    text-decoration: none;
}

.menubar .grip {
    height: 12px;
    margin-right: -6px;
    background-image: radial-gradient(circle, #ddd 1px, transparent 1px);
}

/* toolbars */
.toolbars {
    flex: none;
    display: flex;
    flex-direction: column;
    gap: 2px;
}

.toolbar-row {
    flex: none;
    display: flex;
}

.strip {
    height: 36px;
    display: flex;
    align-items: center;
    padding: 0 2px 0 3px;
    border-radius: 4px;
    background: linear-gradient(#ced1d6, #bfc3c9 40%, #989fa9);
}

.grip {
    flex: none;
    width: 4px;
    height: 20px;
    margin-right: 3px;
    background-image: radial-gradient(circle, #333 1px, transparent 1px);
    background-size: 4px 4px;
}

.sep {
    flex: none;
    width: 8px;
    height: 20px;
    background: linear-gradient(90deg, transparent 3px, #55585e 3px, #55585e 4px, #fff 4px, #fff 5px, transparent 5px);
}

.tool {
    flex: none;
    width: 33px;
    height: 31px;
    display: flex;
    align-items: center;
    justify-content: center;
    color: #1b4b80;
}

.tool svg {
    width: 24px;
    height: 24px;
    fill: #1b4b80;
}

.tool:disabled svg,
.tool:disabled.letter {
    opacity: .5;
}

.tool.on {
    background-color: #dfe5e8;
    border: 1px solid #aab2b8;
    box-shadow: inset 0 0 0 1px #f4f8fa;
}

.tool.on svg {
    opacity: .6;
}

.tool.wide {
    width: 51px;
}

.tool .color-a {
    width: 44px;
    height: 28px;
}

.letter {
    font-size: 28px;
    font-weight: bold;
    line-height: 28px;
}

.letter em {
    font-family: "Liberation Serif", serif;
}

.letter.big {
    font-size: 31px;
}

.badge {
    width: 24px;
    height: 24px;
    margin: 0 5px 0 4px;
    background-color: #1b4b80;
    color: #fff;
    font-family: "Liberation Sans", sans-serif;
    font-size: 12px;
    font-weight: bold;
    border-radius: 2px;
}

.badge.big,
.badge.state {
    font-size: 20px;
    border: 2px solid #2a9bd8;
    border-right-color: #0b2f55;
    border-bottom-color: #0b2f55;
}

.combo {
    position: relative;
    display: flex;
    align-items: center;
    height: 31px;
    background-color: #fff;
    border: 1px solid #fff;
}

.combo select {
    flex: 1;
    height: 29px;
    padding-left: 4px;
}

.combo::after {
    content: "";
    position: absolute;
    right: 0;
    top: 0;
    width: 24px;
    height: 29px;
    background: linear-gradient(#c3c6cb, #a8adb5);
    pointer-events: none;
}

.combo::before {
    content: "";
    position: absolute;
    z-index: 1;
    right: 8px;
    top: 12px;
    border: 4px solid transparent;
    border-top: 6px solid #555;
    border-bottom: 0;
    pointer-events: none;
}

.combo.flat {
    background-color: #efefef;
    outline: 1px solid #a9adb3;
    outline-offset: -1px;
}

.combo.flat::after {
    background: #efefef;
    right: 1px;
    top: 1px;
    height: 27px;
}

.combo.flat::before {
    border-top-color: #8a8a8a;
}

.zoom-combo {
    width: 116px;
    margin: 0 1px 0 2px;
}

.language-combo {
    width: 178px;
    margin: 0 2px 0 1px;
}

.size-combo {
    width: 85px;
    margin-left: 3px;
}

.combo.font-combo {
    width: 295px;
    height: 33px;
    margin: 0 2px 0 5px;
    background-color: #fff;
    color: #6a6a6a;
}

.font-combo select {
    padding-left: 6px;
    font-family: "Liberation Sans", sans-serif;
    font-size: 22px;
}

.tt {
    padding-left: 6px;
    color: #000;
    font-family: "Liberation Serif", serif;
    font-size: 15px;
    text-shadow: -3px -3px #999;
}

.format-combo {
    width: 145px;
    margin: 0 4px 0 2px;
}

.state-combo {
    width: 161px;
    margin: 0 1px 0 2px;
}

/* docks */
.workspace {
    flex: 1;
    min-height: 0;
    display: flex;
    gap: 5px;
    margin-bottom: 1px;
}

.dock {
    display: flex;
    flex-direction: column;
}

.left-dock {
    width: 375px;
}

.right-dock {
    width: 449px;
}

.panel {
    display: flex;
    flex-direction: column;
    background-color: #e9eaec;
    border: 1px solid #ddd;
    padding: 0 2px 1px;
}

.project-panel {
    height: 381px;
}

.output-panel,
.properties-panel {
    flex: 1;
    min-height: 0;
}

.output-panel {
    margin-top: 5px;
}

.panel-title {
    flex: none;
    height: 35px;
    margin: 0 -2px 2px;
    padding: 0 5px 1px 4px;
    display: flex;
    align-items: center;
    gap: 8px;
    color: #4b4b4b;
    background-color: #9d9f9e;
    font-size: 17px;
    font-weight: normal;
    border-bottom: 1px solid #b5b5b5;
}

.panel-title.active {
    background-color: #e9eaec;
}

.panel-title svg {
    width: 14px;
    height: 14px;
}

.panel-title svg:first-of-type {
    margin-left: auto;
}

.panel-tools {
    flex: none;
    height: 35px;
    display: flex;
    align-items: center;
    padding-left: 3px;
    background: linear-gradient(#ced1d6, #bfc3c9 40%, #989fa9);
}

.caret {
    margin: 0 4px 0 5px;
    border: 4px solid transparent;
    border-top: 5px solid #555;
    border-bottom: 0;
}

.tree-wrap {
    flex: 1;
    min-height: 0;
    display: flex;
    background-color: #fff;
}

.tree {
    flex: 1;
    margin: 0;
    padding: 1px 0 0;
    list-style: none;
    overflow: hidden;
    line-height: 28px;
}

.tree li {
    position: relative;
    display: flex;
    align-items: center;
    height: 28px;
    margin-left: 30px;
    border-left: 1px dotted #777;
}

.tree .top:last-child {
    height: 26px;
    line-height: 26px;
}

.tree svg {
    width: 16px;
    height: 14px;
}

.tree .top svg {
    height: 16px;
}

.tree .sub::before {
    content: "";
    align-self: stretch;
    width: 11px;
    margin: 0 0 14px 18px;
    border-left: 1px dotted #777;
    border-bottom: 1px dotted #777;
}

.tree .sub:not(.last)::after {
    content: "";
    position: absolute;
    left: 18px;
    top: 14px;
    height: 14px;
    border-left: 1px dotted #777;
}

.tree .top::before {
    content: "";
    width: 10px;
    border-bottom: 1px dotted #777;
}

.tree span {
    padding: 0 2px;
    margin-left: 3px;
}

.tree .selected {
    background-color: #0078d7;
    color: #fff;
}

.expander {
    position: absolute;
    left: -7px;
    top: 8px;
    width: 13px;
    height: 13px;
    border: 1px solid #919191;
    background: linear-gradient(#33539a, #33539a) no-repeat center / 7px 1px, linear-gradient(#33539a, #33539a) no-repeat center / 1px 7px, #fff;
}

.vscroll {
    width: 25px;
    display: flex;
    flex-direction: column;
    align-items: center;
    padding: 10px 0 8px;
    background-color: #f0f0f0;
}

.vscroll i {
    width: 24px;
    height: 91px;
    margin: 71px 0 auto;
    background-color: #cdcdcd;
}

.vscroll svg,
.hscroll svg,
.object-combo svg {
    width: 12px;
    height: 8px;
    fill: none;
    stroke: #555;
    stroke-width: 2;
}

.dock-tabs {
    flex: none;
    height: 34px;
    display: flex;
    padding: 0 0 1px 4px;
    color: #fff;
    font-size: 16px;
    white-space: nowrap;
}

.dock-tabs button {
    padding: 2px 11px 0;
}

.dock-tabs .current {
    padding: 2px 10px 0 4px;
    color: #000;
    background: linear-gradient(#d3d6dc, #f4f5f7);
    border: 1px solid #d8ecec;
    border-top: 0;
    border-radius: 0 0 5px 5px;
}

.right-dock .dock-tabs button:not(.current) {
    padding: 2px 0 0 11px;
}

.output-tools {
    padding-left: 2px;
}

.filter {
    display: flex;
    align-items: center;
    gap: 2px;
    height: 33px;
    padding: 0 7px 0 4px;
}

.filter svg {
    width: 23px;
    height: 23px;
}

.filter.pressed {
    background: linear-gradient(#fcc98f, #fdae52 45%, #ffe09a 80%, #fff0b0);
    border: 1px solid #c9a878;
}

.list-head {
    flex: none;
    height: 31px;
    padding-left: 5px;
    line-height: 30px;
    font-size: 16px;
    background: linear-gradient(90deg, transparent 364px, #c8c8c8 364px, #c8c8c8 365px, transparent 365px), linear-gradient(#f4f4f4, #e0e0e0);
    border-bottom: 1px solid #b5b5b5;
}

.list-body {
    flex: 1;
    padding-top: 17px;
    background: repeating-linear-gradient(#fff 0 27px, #efefef 27px 28px) content-box, #fff;
}

/* editor */
.editor {
    flex: 1;
    min-width: 0;
    display: flex;
    flex-direction: column;
    background-color: #fff;
    border-right: 1px solid #888;
}

.editor-tabs {
    flex: none;
    height: 36px;
    display: flex;
    align-items: flex-end;
    background: linear-gradient(#989da7, #c9ccd1);
}

.arrow {
    width: 22px;
    height: 34px;
    align-self: flex-start;
}

.arrow.end {
    margin-left: auto;
    width: 32px;
}

.arrow svg {
    width: 10px;
    height: 14px;
    fill: none;
    stroke: #666;
}

.tab {
    height: 33px;
    padding: 0 18px 2px;
    font-size: 16px;
    border-left: 1px solid #7d828a;
    border-top: 1px solid #e6e8ea;
    background: linear-gradient(#d0d3d8, #c0c4c9 50%, #969da6 50%, #9aa1aa);
}

.tab.first {
    padding: 0 15px 2px 46px;
    border-left: 0;
    clip-path: polygon(34px 0, 100% 0, 100% 100%, 0 100%);
}

.tab.current {
    display: flex;
    align-items: center;
    gap: 17px;
    margin-left: -22px;
    padding: 0 10px 2px 36px;
    font-size: 17px;
    font-weight: bold;
    background: #fff;
    clip-path: polygon(26px 0, 100% 0, 100% 100%, 0 100%);
}

.tab svg {
    width: 13px;
    height: 13px;
    color: #444;
}

.editor-body {
    flex: 1;
    min-height: 0;
    display: flex;
    flex-direction: column;
    margin: 3px 4px 4px;
    border: 1px solid #6b6b6b;
    border-right-color: #ddd;
    border-bottom-color: #ddd;
}

.canvas {
    flex: 1;
    min-height: 0;
    overflow: hidden;
    background-color: #ababab;
}

.hscroll {
    flex: none;
    height: 27px;
    display: flex;
    align-items: center;
    justify-content: space-between;
    padding: 0 8px 0 6px;
    background-color: #f0f0f0;
    border-top: 1px solid #fff;
}

.hscroll svg {
    width: 12px;
    height: 14px;
}

.hscroll i {
    flex: 1;
    height: 25px;
    margin: 0 51px 0 8px;
    background-color: #cdcdcd;
}

/* HMI screen, elements sit at their drawn coordinates */
.hmi {
    position: relative;
    width: 1025px;
    height: 601px;
    background-color: #fcfcfc;
    border-right: 1px solid #666;
    border-bottom: 1px solid #666;
    font-family: Inter, "Liberation Sans", sans-serif;
    font-weight: 900;
}

.item {
    position: absolute;
}

.banner {
    left: 83px;
    top: 2px;
    width: 846px;
    height: 62px;
    text-align: center;
    font: bold 28px/64px "Liberation Sans", Arial, sans-serif;
    color: #ff0;
    background-color: #0080c0;
}

.cyan-box {
    left: 59px;
    top: 109px;
    width: 445px;
    height: 373px;
    border: 1px solid #000;
    background: linear-gradient(#96ffff, #00ffff);
}

.key {
    height: 53px;
    padding-top: 2px;
    font-size: 29px;
    border: 1px solid #a0a0a0;
    box-shadow: inset 0 0 0 1px #fff;
}

.red {
    background: linear-gradient(#ff9898, #ff0000 75%);
}

.blue {
    background: linear-gradient(#9898ff, #0000ff 75%);
}

.teal {
    top: 537px;
    height: 54px;
    padding-top: 0;
    font: 500 24px "Noto Sans", sans-serif;
    background: linear-gradient(#b3cccc, #408080 75%);
}

.teal.low {
    top: 538px;
}

.start {
    left: 91px;
    top: 150px;
    width: 187px;
}

.stop {
    left: 287px;
    top: 149px;
    width: 187px;
}

.emergency {
    left: 189px;
    top: 244px;
    width: 197px;
    font-size: 26px;
}

.fault {
    left: 130px;
    top: 337px;
    width: 305px;
    height: 59px;
    font-size: 34px;
    color: #ff0;
}

.reset {
    left: 188px;
    top: 408px;
    width: 196px;
    font-size: 26px;
}

.status {
    left: 638px;
    top: 82px;
    width: 253px;
    height: 35px;
    line-height: 37px;
    text-align: center;
    font-size: 34px;
    color: #ff8000;
    background-color: #000;
}

.running {
    left: 572px;
    top: 135px;
    width: 172px;
    height: 49px;
    font-size: 24px;
}

.complete {
    left: 774px;
    top: 135px;
    width: 199px;
    height: 49px;
    font-size: 24px;
}

.green-box {
    left: 522px;
    top: 188px;
    width: 495px;
    height: 213px;
    display: flex;
    justify-content: space-between;
    padding: 11px 21px 8px 7px;
    border: 1px solid #000;
    background: linear-gradient(#ccff99, #80ff00);
}

.labels {
    width: 227px;
    display: grid;
    grid-auto-rows: 48px;
    align-items: center;
    justify-items: center;
    background-color: #fcfcfc;
    font-size: 22px;
    white-space: nowrap;
}

.labels .small {
    font-size: 20px;
}

.values {
    display: grid;
    grid-auto-rows: 39px;
    gap: 10px;
    padding-top: 5px;
}

.hmi input {
    width: 216px;
    height: 39px;
    text-align: center;
    font: 16px "Liberation Sans", Arial, sans-serif;
    background-color: #fff;
    border: 6px solid #000;
    box-shadow: inset 1px 1px #999;
}

.actual {
    left: 522px;
    top: 420px;
    display: grid;
    grid-template-columns: 251px 214px;
    grid-auto-rows: 46px;
    gap: 1px 15px;
    align-items: center;
    justify-items: center;
    font-size: 24px;
}

.actual label {
    padding-top: 5px;
}

.hmi .actual input {
    width: 214px;
    height: 46px;
    border-color: #f00;
    box-shadow: inset 1px 1px #400;
}

.home {
    left: 75px;
    width: 130px;
}

.io {
    left: 209px;
    width: 163px;
}

.servo {
    left: 376px;
    width: 130px;
}

.thyristor {
    left: 511px;
    width: 151px;
}

.trend {
    left: 668px;
    width: 123px;
}

.vfd {
    left: 796px;
    width: 132px;
}

/* properties */
.object-row {
    flex: none;
    display: flex;
    height: 27px;
    margin-bottom: 1px;
}

.object-combo {
    flex: 1;
    display: flex;
    align-items: center;
    padding-right: 7px;
    background-color: #fff;
    border: 1px solid #777;
    font-family: "Liberation Serif", serif;
    font-size: 16px;
}

.object-combo select {
    flex: 1;
    padding-left: 5px;
}

.object-combo svg {
    stroke-width: 1;
}

.spin {
    width: 90px;
    display: flex;
    padding: 2px;
    background-color: #efefef;
    font-family: "Liberation Serif", serif;
    font-size: 16px;
    color: #888;
}

.spin input {
    width: 57px;
}

.spin span {
    display: grid;
    width: 28px;
}

.spin button {
    font: 9px/9px "DejaVu Sans", sans-serif;
    color: #555;
    border: 1px solid #ddd;
}

.grid-wrap {
    flex: 1;
    background-color: #fff;
    border: 1px solid #666;
}

.props {
    width: 100%;
    table-layout: fixed;
    border-collapse: collapse;
    font-family: "Noto Sans", sans-serif;
    font-size: 16px;
}

.props th,
.props td {
    height: 31px;
    padding: 0 0 1px 3px;
    border-bottom: 1px solid #c8c8c8;
    text-align: left;
    font-weight: normal;
}

.props th {
    width: 209px;
    padding-left: 27px;
    border-right: 1px solid #c8c8c8;
    background: linear-gradient(90deg, #ebe9e3, #fafafa);
}

.props .child th {
    padding-left: 47px;
    background: linear-gradient(90deg, #fff 20px, #c8c8c8 20px, #c8c8c8 21px, #ebe9e3 21px, #fafafa);
}

.props .group th {
    position: relative;
    color: #fff;
    border-right: 0;
    background: linear-gradient(90deg, #7f97df, #fff);
}

.collapse {
    position: absolute;
    left: 4px;
    top: 5px;
    width: 16px;
    height: 16px;
    border: 1px solid #4a64a8;
    background: linear-gradient(#1f3566, #1f3566) no-repeat center / 8px 2px, linear-gradient(135deg, #fff, #b7c8f2);
}

.swatch {
    display: inline-block;
    width: 21px;
    height: 22px;
    margin: 0 3px 0 1px;
    vertical-align: middle;
    background-color: #fcfcfc;
    border: 1px solid #000;
    border-radius: 2px;
}

/* bottom */
.bottom-row {
    margin-bottom: 2px;
}

.statusbar {
    flex: none;
    height: 28px;
    display: flex;
    color: #fff;
    background: linear-gradient(#434854, #3a3e48 7px, #2d2d2d 7px, #333);
    line-height: 32px;
    white-space: nowrap;
}

.statusbar span {
    padding-left: 3px;
    border-left: 1px solid #666;
}

.statusbar .blank {
    width: 488px;
    border: 0;
}

.statusbar .link {
    width: 232px;
}

.statusbar .pos {
    width: 530px;
    padding-left: 12px;
}

.statusbar .model {
    flex: 1;
}

.statusbar .lock {
    padding: 0 3px;
    color: #8a8a8a;
}
```
